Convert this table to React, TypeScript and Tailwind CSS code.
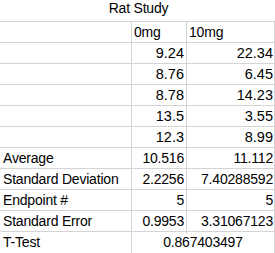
const cal = "font-['Liberation_Sans',Arial,sans-serif] text-[14px] tracking-[-0.2px]";
const ari = "font-['Liberation_Sans',Arial,sans-serif] text-[14.5px]";

type Row = {
  label: string;
  b: string;
  c: string;
  font: "cal" | "ari";
};

const rows: Row[] = [
  { label: "", b: "9.24", c: "22.34", font: "ari" },
  { label: "", b: "8.76", c: "6.45", font: "ari" },
  { label: "", b: "8.78", c: "14.23", font: "ari" },
  { label: "", b: "13.5", c: "3.55", font: "ari" },
  { label: "", b: "12.3", c: "8.99", font: "ari" },
  { label: "Average", b: "10.516", c: "11.112", font: "cal" },
  { label: "Standard Deviation", b: "2.2256", c: "7.40288592", font: "cal" },
  { label: "Endpoint #", b: "5", c: "5", font: "cal" },
  { label: "Standard Error", b: "0.9953", c: "3.31067123", font: "cal" },
];

const line = "border-[#d4d4d4]";

export default function App() {
  return (
    <div className="w-[275px] h-[253px] bg-white text-black overflow-hidden">
      {/* title row, merged A:C */}
      <div className={`h-[22px] border-b ${line} flex items-end justify-center pb-[2px] ${cal}`}>
        <span className="pl-[2px]">Rat Study</span>
      </div>

      {/* header row */}
      <div className={`grid grid-cols-[132px_55px_88px] h-[21px] border-b ${line} ${cal}`}>
        <div className={`border-r ${line}`} />
        <div className={`border-r ${line} flex items-end pb-[2px] pl-[2px]`}>0mg</div>
        <div className={`border-r ${line} flex items-end pb-[2px] pl-[2px]`}>10mg</div>
      </div>

      {rows.map((r, i) => (
        <div
          key={i}
          className={`grid grid-cols-[132px_55px_88px] h-[21px] border-b ${line} ${r.font === "cal" ? cal : ari}`}
        >
          <div className={`border-r ${line} flex items-end pb-[2px] pl-[3px] whitespace-nowrap`}>
            {r.label}
          </div>
          <div className={`border-r ${line} flex items-end justify-end pb-[2px] pr-[2px]`}>
            {r.b}
          </div>
          <div className={`border-r ${line} flex items-end justify-end pb-[2px] pr-[1px]`}>
            {r.c}
          </div>
        </div>
      ))}

      {/* t-test row, value merged B:C */}
      <div className={`grid grid-cols-[132px_143px] h-[21px] ${cal}`}>
        <div className={`border-r ${line} flex items-end pb-[2px] pl-[3px]`}>T-Test</div>
        <div className={`border-r ${line} flex items-end justify-center pb-[2px]`}>0.867403497</div>
      </div>
    </div>
  );
}
